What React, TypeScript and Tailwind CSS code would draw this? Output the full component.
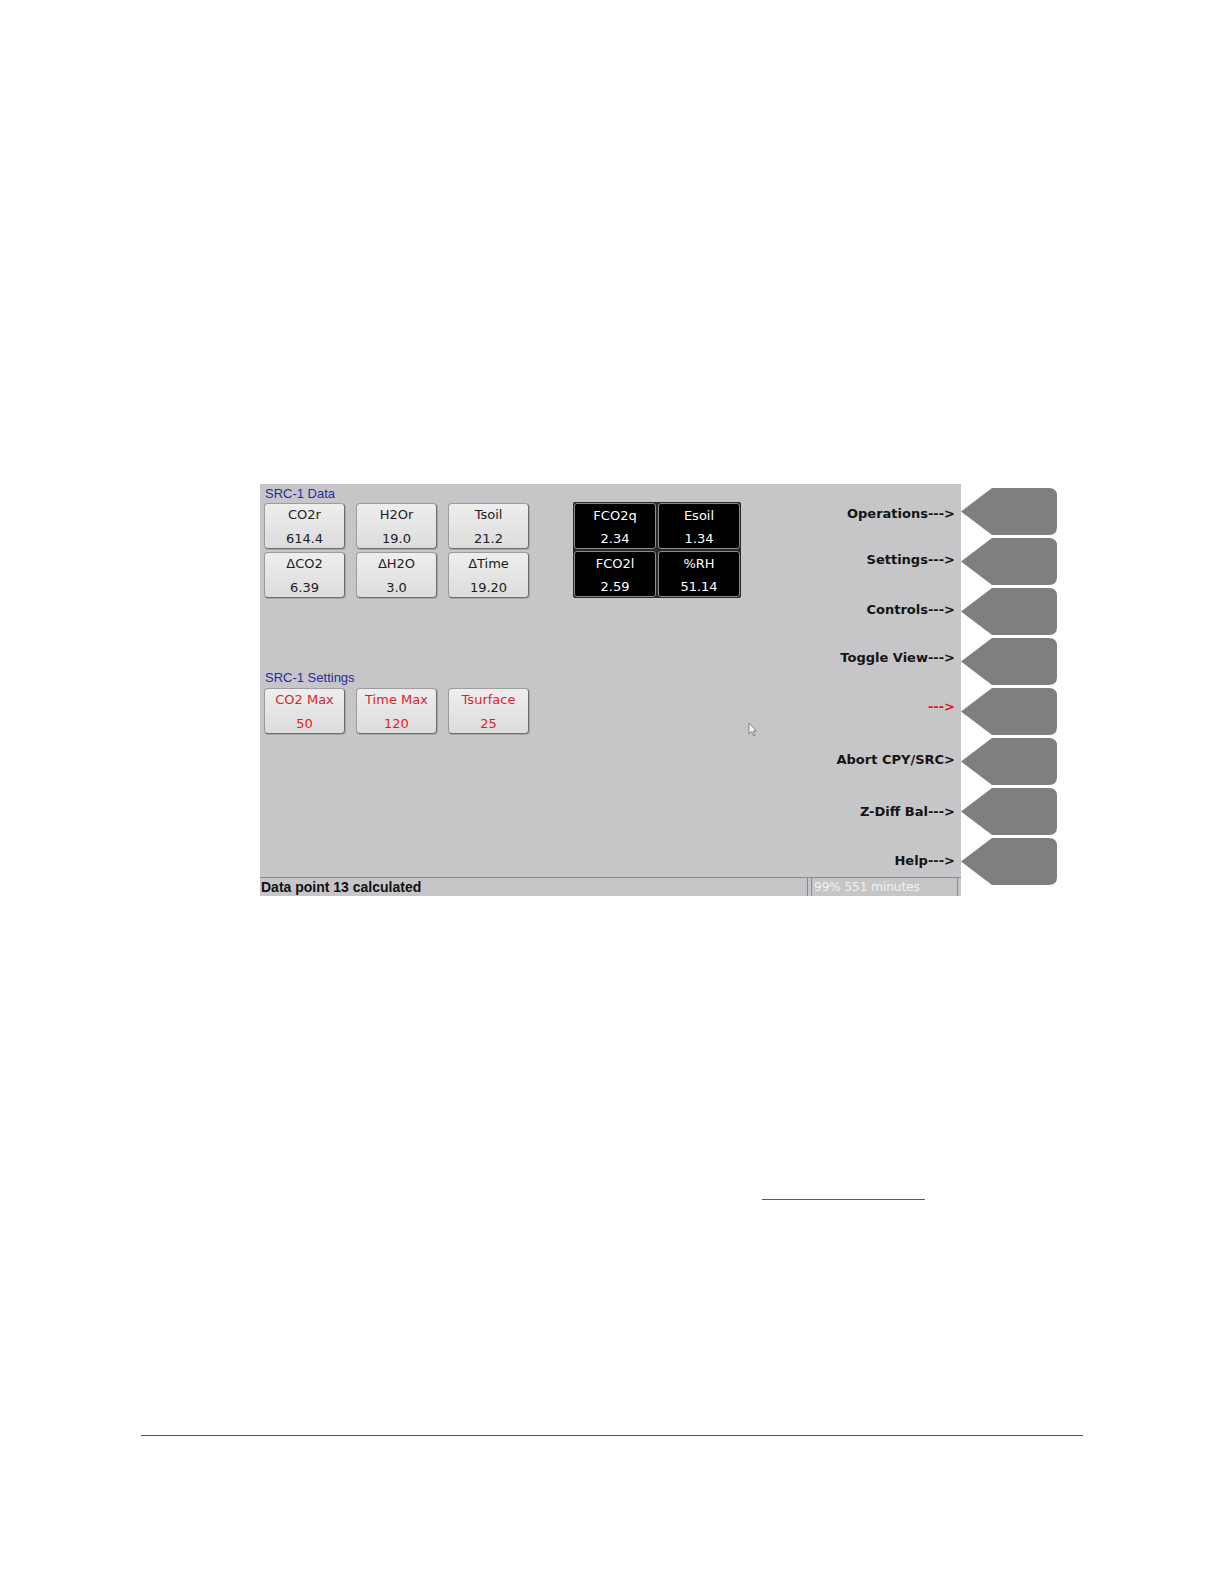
import React from "react";

interface Tile {
  label: string;
  value: string;
}

const dataTiles: Tile[] = [
  { label: "CO2r", value: "614.4" },
  { label: "H2Or", value: "19.0" },
  { label: "Tsoil", value: "21.2" },
  { label: "ΔCO2", value: "6.39" },
  { label: "ΔH2O", value: "3.0" },
  { label: "ΔTime", value: "19.20" },
];

const fluxTiles: Tile[] = [
  { label: "FCO2q", value: "2.34" },
  { label: "Esoil", value: "1.34" },
  { label: "FCO2l", value: "2.59" },
  { label: "%RH", value: "51.14" },
];

const settingTiles: Tile[] = [
  { label: "CO2 Max", value: "50" },
  { label: "Time Max", value: "120" },
  { label: "Tsurface", value: "25" },
];

// soft key labels, margins picked so each sits next to its key
const softKeys = [
  { text: "Operations--->", cls: "mt-[22px]", red: false },
  { text: "Settings--->", cls: "mt-[30px]", red: false },
  { text: "Controls--->", cls: "mt-[34px]", red: false },
  { text: "Toggle View--->", cls: "mt-[32px]", red: false },
  { text: "--->", cls: "mt-[33px]", red: true },
  { text: "Abort CPY/SRC>", cls: "mt-[37px]", red: false },
  { text: "Z-Diff Bal--->", cls: "mt-[36px]", red: false },
  { text: "Help--->", cls: "mt-[33px]", red: false },
];

const verdana = { fontFamily: '"DejaVu Sans", Verdana, sans-serif' };
const tahoma = { fontFamily: '"Liberation Sans", Arial, sans-serif' };

function GrayTile({ tile, red }: { tile: Tile; red?: boolean }) {
  return (
    <div
      className={`w-[81px] h-[46px] rounded-[4px] border border-[#9c9c9c] border-r-[#6c6c6c] border-b-[#6c6c6c] bg-gradient-to-b from-[#eeeeee] to-[#dcdcdc] shadow-[1px_1px_0_#a8a8a8] flex flex-col items-center text-[13px] leading-[16px] ${
        red ? "text-[#e41e1e]" : "text-[#202020]"
      }`}
      style={verdana}
    >
      <div className="mt-[3px]">{tile.label}</div>
      <div className="mt-[8px]">{tile.value}</div>
    </div>
  );
}

function BlackTile({ tile }: { tile: Tile }) {
  return (
    <div
      className="w-[82px] h-[46px] rounded-[3px] border border-[#8c8c8c] bg-black text-white flex flex-col items-center text-[13px] leading-[16px]"
      style={verdana}
    >
      <div className="mt-[4px]">{tile.label}</div>
      <div className="mt-[7px]">{tile.value}</div>
    </div>
  );
}

function SoftKey() {
  return (
    <svg width="97" height="47" viewBox="0 0 97 47" className="block">
      <path
        d="M0 23.5 L31 0 H88 Q96 0 96 8 V39 Q96 47 88 47 H31 Z"
        fill="#7f7f7f"
      />
    </svg>
  );
}

function Cursor() {
  return (
    <svg
      width="10"
      height="15"
      viewBox="0 0 10 15"
      className="absolute left-[488px] top-[238px]"
    >
      <path
        d="M1 1 L1 12 L3.5 9.5 L5.5 14 L7 13.3 L5 9 L8.5 9 Z"
        fill="#f4f4f4"
        stroke="#707070"
        strokeWidth="0.8"
      />
    </svg>
  );
}

export default function App() {
  return (
    <div className="min-h-[1584px] w-[1224px] bg-white">
      <div className="pt-[484px] pl-[260px] flex items-start">
        {/* instrument screen */}
        <div className="relative w-[701px] h-[412px] bg-[#c6c6c9] flex flex-col">
          <div className="flex-1 flex">
            <div className="flex-1 pl-[4px] pt-[2px]">
              <div
                className="h-[16px] leading-[16px] text-[13px] text-[#2a2aa0] pl-[1px]"
                style={tahoma}
              >
                SRC-1 Data
              </div>
              <div className="flex items-start mt-[1px]">
                <div className="grid grid-cols-[81px_81px_81px] gap-x-[11px] gap-y-[3px]">
                  {dataTiles.map((t) => (
                    <GrayTile key={t.label} tile={t} />
                  ))}
                </div>
                <div className="ml-[44px] -mt-[1px] grid grid-cols-[82px_82px] gap-[2px] p-[1px] bg-[#2a2a2a] rounded-[2px]">
                  {fluxTiles.map((t) => (
                    <BlackTile key={t.label} tile={t} />
                  ))}
                </div>
              </div>

              <div
                className="mt-[72px] h-[16px] leading-[16px] text-[13px] text-[#2a2aa0] pl-[1px]"
                style={tahoma}
              >
                SRC-1 Settings
              </div>
              <div className="mt-[2px] flex gap-x-[11px]">
                {settingTiles.map((t) => (
                  <GrayTile key={t.label} tile={t} red />
                ))}
              </div>
            </div>

            {/* labels for the soft keys */}
            <div className="w-[160px] pr-[6px] flex flex-col items-end">
              {softKeys.map((k) => (
                <div
                  key={k.text}
                  className={`${k.cls} h-[16px] leading-[16px] text-[13px] font-bold ${
                    k.red ? "text-[#e01818]" : "text-[#141414]"
                  }`}
                  style={verdana}
                >
                  {k.text}
                </div>
              ))}
            </div>
          </div>

          {/* status bar */}
          <div className="h-[19px] flex border-t border-[#8a8a8a]">
            <div
              className="w-[548px] border-r border-[#8a8a8a] pl-[1px] text-[14px] leading-[18px] font-bold text-[#111]"
              style={tahoma}
            >
              Data point 13 calculated
            </div>
            <div
              className="ml-[3px] w-[147px] border-l border-r border-[#8a8a8a] pl-[2px] text-[12px] leading-[18px] text-[#f2f2f2]"
              style={verdana}
            >
              99% 551 minutes
            </div>
          </div>

          <Cursor />
        </div>

        {/* soft keys */}
        <div className="pt-[4px] flex flex-col gap-[3px]">
          {softKeys.map((k) => (
            <SoftKey key={k.text} />
          ))}
        </div>
      </div>

      <div className="mt-[303px] ml-[762px] w-[163px] h-[1px] bg-[#3b55c8]" />
      <div className="mt-[235px] ml-[141px] w-[942px] h-[1px] bg-[#555555]" />
    </div>
  );
}
